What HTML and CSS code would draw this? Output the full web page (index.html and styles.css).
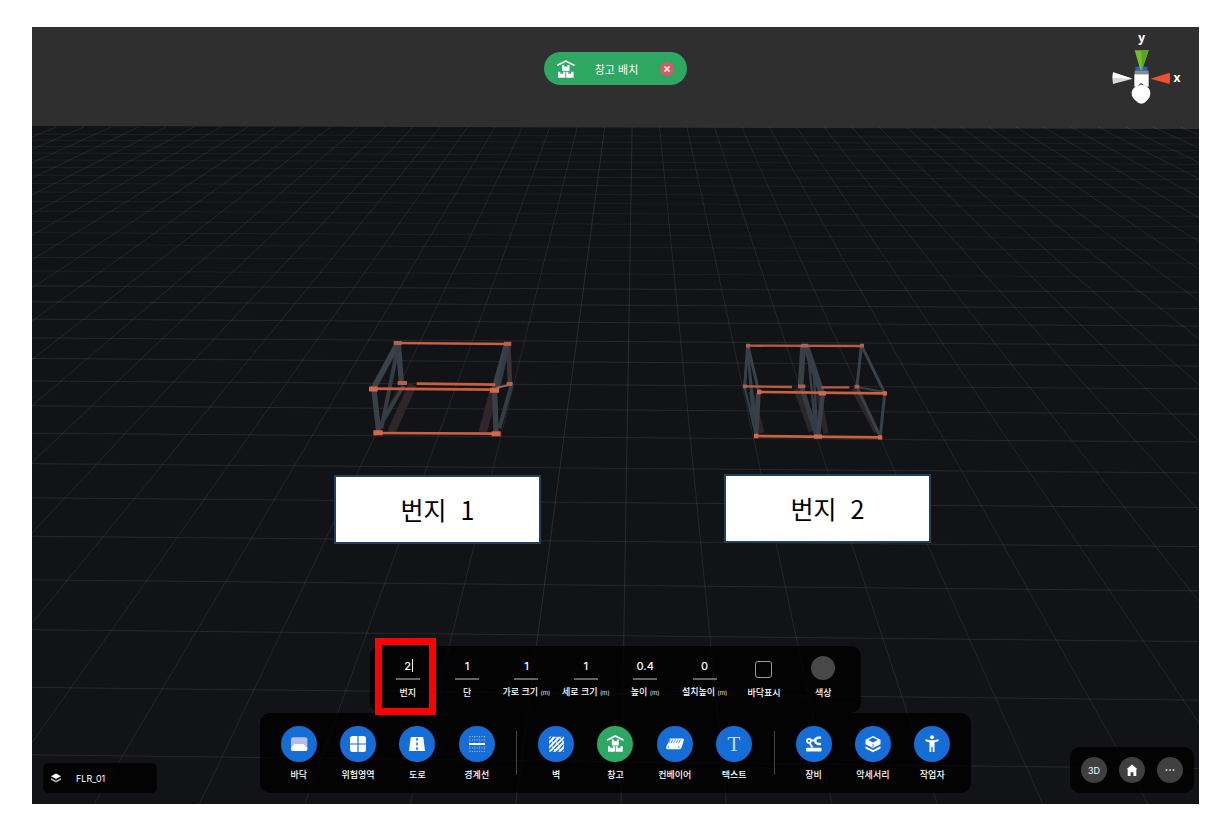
FILE: index.html
```html
<!DOCTYPE html>
<html lang="ko">
<head>
    <meta charset="UTF-8">
    <title>창고 배치</title>
    <meta name="viewport" content="width=device-width, initial-scale=1.0">
    <link rel="stylesheet" href="styles.css">
</head>
<body>
    <svg width="0" height="0" class="defs" aria-hidden="true">
        <symbol id="warehouse" viewBox="9 8 19 19">
            <path d="M10 14.2L18.3 10L26.6 14.2" fill="none" stroke="#fff" stroke-width="1.6"/>
            <path d="M14.8 13.6h2v2.2l1.5-1 1.5 1v-2.2h2v5.8h-7zM11 20.2h2.2v2.3l1.3-.9 1.3.9v-2.3h2.1v5.6H11zM18.7 20.2h2.1v2.3l1.3-.9 1.3.9v-2.3h2.3v5.6h-7z" fill="#fff"/>
        </symbol>
    </svg>

    <main class="stage">
        <svg class="scene" viewBox="0 0 1167 777" preserveAspectRatio="none" aria-hidden="true">
            <path class="floor" d="M0 99L1167 102V777H0z"/>
            <g id="grid"></g>

            <!-- rack with one bay -->
            <g transform="translate(318 298) scale(.3333)" fill="none">
                <path stroke="#302528" stroke-width="25" d="M188 178L124 322M432 196L398 322"/>
                <path stroke="#3b3336" stroke-width="14" d="M475 58L480 176"/>
                <path stroke="#3a4047" stroke-width="16" d="M145 58L154 172M72 195L86 320M434 198L438 322"/>
                <path stroke="#394149" stroke-width="18" d="M142 58L70 190M470 60L434 190"/>
                <path stroke="#343c44" stroke-width="12" d="M144 66L94 310M160 182L92 300M472 70L444 190M484 182L448 310"/>
                <path stroke="#c95f40" stroke-width="8" d="M144 54L474 57M200 176L436 179M70 191L434 194M84 324L440 326"/>
                <path stroke="#8a6a67" stroke-width="6" d="M440 188L486 178"/>
                <path stroke="#b7614b" stroke-width="12" d="M131 54h24M462 56h22M143 174h28M470 177h18"/>
                <path stroke="#d8674a" stroke-width="15" d="M57 192h26M420 196h27M70 323h28M425 326h27"/>
            </g>

            <!-- rack with two bays -->
            <g transform="translate(688 298) scale(.3333)" fill="none">
                <path stroke="#2c2529" stroke-width="16" d="M92 200L126 324M228 190L274 320M296 200L318 326M400 190L470 322"/>
                <path stroke="#394047" stroke-width="9" d="M83 64L74 182M424 64L411 184M494 206L481 334"/>
                <path stroke="#3a3f44" stroke-width="17" d="M249 64L242 182"/>
                <path stroke="#39414a" stroke-width="9" d="M84 64L116 198M426 64L492 200M413 190L478 330"/>
                <path stroke="#37404a" stroke-width="19" d="M258 64L304 200"/>
                <path stroke="#363e46" stroke-width="7" d="M74 186L108 332M84 80L100 300M84 90L112 330M264 80L286 310M280 120L292 320"/>
                <path stroke="#333c45" stroke-width="15" d="M245 188L290 330"/>
                <path stroke="#3b4046" stroke-width="14" d="M115 204L109 328M308 208L294 330"/>
                <path stroke="#3e3e42" stroke-width="6" d="M412 186L488 200"/>
                <path stroke="#bd5b42" stroke-width="7" d="M82 62L426 63M74 184L216 186M304 187L388 187"/>
                <path stroke="#cb633f" stroke-width="8" d="M116 201L494 205M108 333L480 337"/>
                <path stroke="#a86355" stroke-width="11" d="M78 62h12M243 62h22M420 62h12M69 184h12M234 184h22M404 185h14"/>
                <path stroke="#d1694c" stroke-width="13" d="M111 201h13M296 205h22M488 205h13M102 333h13M282 335h24M474 337h13"/>
            </g>
        </svg>

        <p class="note note-one">번지&nbsp; 1</p>
        <p class="note note-two">번지&nbsp; 2</p>

        <svg class="gizmo" viewBox="0 0 324 300" role="img" aria-label="축">
            <path d="M136 140h36v14h-36z" fill="#2460d8"/>
            <path d="M134 91h42L156 150h-5z" fill="#73bd31"/>
            <path d="M154 91h22L156 150z" fill="#5da422"/>
            <path d="M134 152h42v12h-42z" fill="#8a8a8a"/>
            <path d="M133 163h43v37h-43z" fill="#fff"/>
            <path d="M69 157q-4 18 0 35l59-16z" fill="#d9d9d9"/>
            <path d="M69 157l59 19-60-3z" fill="#fff"/>
            <path d="M239 158q4 17 0 34l-58-16z" fill="#f0502f"/>
            <path d="M139 201l14-13 15 13z" fill="#666"/>
            <path d="M125 220q0-14 12-20 8-5 17-5t17 5q10 7 10 20 0 12-8 19-9 11-19 12-10-1-20-12-9-7-9-19z" fill="#fff"/>
            <text x="155" y="66" class="axis">y</text>
            <text x="261" y="187" class="axis">x</text>
        </svg>

        <div class="mode">
            <svg class="mode-icon" aria-hidden="true"><use href="#warehouse"/></svg>
            <span>창고 배치</span>
            <button class="mode-close" type="button" aria-label="닫기">
                <svg viewBox="0 0 14 14"><path d="M4.5 4.5l5 5M9.5 4.5l-5 5" stroke="#fff" stroke-width="1.6"/></svg>
            </button>
        </div>

        <div class="bottom">
            <div class="layer">
                <svg viewBox="0 0 12 12" aria-hidden="true">
                    <path d="M6 1.5L11 4.2 6 7 1 4.2z" fill="#fff"/>
                    <path d="M1 6l5 2.8L11 6v1.8l-5 2.7-5-2.7z" fill="#bbb"/>
                </svg>
                <span>FLR_01</span>
            </div>

            <div class="tools">
                <form class="options">
                    <label class="option selected">
                        <input class="value" type="text" value="2">
                        <span class="caption">번지</span>
                    </label>
                    <label class="option">
                        <input class="value" type="text" value="1">
                        <span class="caption">단</span>
                    </label>
                    <label class="option">
                        <input class="value" type="text" value="1">
                        <span class="caption">가로 크기 <small>(m)</small></span>
                    </label>
                    <label class="option">
                        <input class="value" type="text" value="1">
                        <span class="caption">세로 크기 <small>(m)</small></span>
                    </label>
                    <label class="option">
                        <input class="value" type="text" value="0.4">
                        <span class="caption">높이 <small>(m)</small></span>
                    </label>
                    <label class="option">
                        <input class="value" type="text" value="0">
                        <span class="caption">설치높이 <small>(m)</small></span>
                    </label>
                    <label class="option">
                        <input class="check" type="checkbox">
                        <span class="caption">바닥표시</span>
                    </label>
                    <label class="option">
                        <button class="swatch" type="button" aria-label="색상"></button>
                        <span class="caption">색상</span>
                    </label>
                </form>

                <nav class="dock">
                    <button class="tool" type="button">
                        <svg viewBox="0 0 36 36">
                            <rect x="10" y="11.3" width="16.4" height="13.4" rx="2" fill="#b4bdf0"/>
                            <path d="M13.5 18h9.2l3.7 4v1a2 2 0 0 1-2 2H12a2 2 0 0 1-2-2v-1z" fill="#fff"/>
                        </svg>
                        <span>바닥</span>
                    </button>
                    <button class="tool" type="button">
                        <svg viewBox="0 0 36 36">
                            <rect x="10" y="10" width="16" height="16" rx="2.5" fill="#fff"/>
                            <path d="M18 10v16M10 18h16" stroke="#176dd6" stroke-width="1.2"/>
                        </svg>
                        <span>위험영역</span>
                    </button>
                    <button class="tool" type="button">
                        <svg viewBox="0 0 36 36">
                            <path d="M12.6 11h10.8q.8 0 1 .9L26 25H10l1.600-13.100q.2-.9 1-.9z" fill="#fff"/>
                            <path d="M18 12v12.5" stroke="#176dd6" stroke-width="1.5" stroke-dasharray="2.8 1.8"/>
                        </svg>
                        <span>도로</span>
                    </button>
                    <button class="tool" type="button">
                        <svg viewBox="0 0 36 36">
                            <path d="M10.5 10.500h15.5M10.500 14h15.5M10.500 22h15.500M10.500 25.500h15.500" stroke="#a9caf2" stroke-dasharray="1 1.400"/>
                            <path d="M10.500 11v6M15.500 11v6M20.500 11v6M25.500 11v6M10.500 20v5M15.500 20v5M20.500 20v5M25.500 20v5" stroke="#6ba4e6" stroke-width=".8" stroke-dasharray="1 1.400"/>
                            <path d="M10 18h16" stroke="#fff" stroke-width="1.8"/>
                        </svg>
                        <span>경계선</span>
                    </button>
                    <span class="divider"></span>
                    <button class="tool" type="button">
                        <svg viewBox="0 0 36 36">
                            <path d="M11 10.700h15v15H11z" fill="#fff"/>
                            <path d="M10.500 14.500l4.500-4.500M10.500 19.500l9.500-9.500M10.500 24.500l14.500-14.500M12.500 27L27 12.500M17.500 27l9.500-9.500M22.500 27l4.500-4.500" stroke="#176dd6" stroke-width="1.400" stroke-dasharray="5 .8"/>
                        </svg>
                        <span>벽</span>
                    </button>
                    <button class="tool active" type="button">
                        <svg viewBox="0 0 36 36"><use href="#warehouse" x="9" y="8" width="19" height="19"/></svg>
                        <span>창고</span>
                    </button>
                    <button class="tool" type="button">
                        <svg viewBox="0 0 36 36">
                            <path d="M13 12.500h12.500q1.800 0 1.300 1.700l-2 6.800q-.6 2.300-2.600 2.300H11q-2.300 0-1.900-2.100.2-1 .8-1.800z" fill="#fff"/>
                            <path d="M13.500 13.300l-2 4M16 13.300l-2 4M18.500 13.300l-2 4M21 13.300l-2 4M23.500 13.300l-2 4" stroke="#176dd6" stroke-width=".7"/>
                            <circle cx="11.300" cy="21" r=".7" fill="#176dd6"/><circle cx="21.800" cy="21" r=".7" fill="#176dd6"/>
                        </svg>
                        <span>컨베이어</span>
                    </button>
                    <button class="tool" type="button">
                        <svg viewBox="0 0 36 36"><text x="18" y="25" class="serif-t">T</text></svg>
                        <span>텍스트</span>
                    </button>
                    <span class="divider"></span>
                    <button class="tool" type="button">
                        <svg viewBox="0 0 36 36" fill="none" stroke="#fff">
                            <rect x="10" y="21.700" width="15.500" height="3.800" rx="1" fill="#fff" stroke="none"/>
                            <circle cx="13" cy="14.800" r="2" stroke-width="1.700"/>
                            <path d="M15 14.600h4M13.500 17l3 4.500" stroke-width="2"/>
                            <path d="M25 11.700h-3.200L19.500 13v3.500l2.300 1.500H25" stroke-width="2.300"/>
                        </svg>
                        <span>장비</span>
                    </button>
                    <button class="tool" type="button">
                        <svg viewBox="0 0 36 36">
                            <path d="M18 10l7.500 3.800v4.500L18 22l-7.500-3.700v-4.500z" fill="#fff"/>
                            <path d="M18 11.400l4.800 2.600-4.800 2.500-4.800-2.500zM17.600 18h.8v3h-.8z" fill="#176dd6"/>
                            <path d="M10.500 20.300L18 24l7.500-3.700v2.300L18 26.300l-7.500-3.700z" fill="#fff"/>
                        </svg>
                        <span>악세서리</span>
                    </button>
                    <button class="tool" type="button">
                        <svg viewBox="0 0 36 36">
                            <circle cx="18" cy="11.300" r="2" fill="#fff"/>
                            <path d="M11.500 13.300l4.500 1h4l4.500-1 .3 1.700-4.300 1.500V26h-1.800v-5h-1.400v5h-1.800v-9.500L11.200 15z" fill="#fff"/>
                        </svg>
                        <span>작업자</span>
                    </button>
                </nav>
            </div>

            <div class="view">
                <button type="button">3D</button>
                <button type="button" aria-label="홈">
                    <svg viewBox="0 0 26 26"><path d="M13 7.500l5.500 4.800h-1.200V19h-2.900v-3.700h-2.800V19H8.700v-6.700H7.500z" fill="#fff"/></svg>
                </button>
                <button type="button" aria-label="더보기">
                    <svg viewBox="0 0 26 26" fill="#ccc"><circle cx="9.500" cy="13" r="1"/><circle cx="13" cy="13" r="1"/><circle cx="16.500" cy="13" r="1"/></svg>
                </button>
            </div>
        </div>
    </main>
    <script src="grid.js"></script>
</body>
</html>
```

FILE: styles.css
```css
*,
*::before,
*::after {
    box-sizing: border-box;
}
body {
    margin: 0;
    padding: 27px 27px 18px 32px;
    min-height: 100vh;
    display: flex;
    background: #fff;
    font-family: Inter, "Noto Sans CJK KR", sans-serif;
    color: #fff;
}
button {
    border: none;
    padding: 0;
    background: none;
    color: inherit;
    font-family: inherit;
    cursor: pointer;
}
.defs {
    position: absolute;
}
.stage {
    position: relative;
    flex: 1;
    display: flex;
    flex-direction: column;
    justify-content: space-between;
    align-items: center;
    padding-top: 25px;
    background: #2f2f2f;
    overflow: hidden;
}
.scene {
    position: absolute;
    inset: 0;
    width: 100%;
    height: 100%;
}
.floor {
    fill: #121317;
}
.grid-line {
    stroke: #fff;
    stroke-opacity: 0.1;
    stroke-width: 1;
}
/* labels pinned on the canvas */
.note {
    position: absolute;
    margin: 0;
    width: 207px;
    height: 69px;
    display: flex;
    align-items: center;
    justify-content: center;
    padding-bottom: 2px;
    background: #fff;
    border: 2px solid #24405c;
    color: #000;
    font-family: "Noto Sans CJK KR", sans-serif;
    font-size: 25px;
    font-weight: 400;
}
.note-one {
    left: 302px;
    top: 448px;
}
.note-two {
    left: 692px;
    top: 447px;
}
.gizmo {
    position: absolute;
    right: 1px;
    top: -7px;
    width: 108px;
    height: 100px;
}
.axis {
    fill: #fff;
    font-family: "Open Sans", sans-serif;
    font-size: 36px;
    font-weight: 700;
    text-anchor: middle;
}
/* top pill */
.mode {
    position: relative;
    display: flex;
    align-items: center;
    height: 33px;
    padding: 0 13px 0 12px;
    border-radius: 17px;
    background: #2ea762;
    font-size: 11px;
}
.mode-icon {
    width: 20px;
    height: 20px;
    margin-right: 19px;
}
.mode-close {
    width: 14px;
    height: 14px;
    margin-left: 22px;
    border-radius: 50%;
    background: #d85a66;
}
.mode-close svg,
.view svg {
    display: block;
    width: 100%;
}
.bottom {
    position: relative;
    width: 100%;
    display: grid;
    grid-template-columns: 1fr auto 1fr;
    align-items: end;
    padding: 0 5px 11px;
}
.layer,
.options,
.dock,
.view {
    background: rgba(0, 0, 0, 0.8);
    border-radius: 10px;
}
.layer {
    justify-self: start;
    display: flex;
    align-items: center;
    width: 114px;
    height: 30px;
    margin-left: 6px;
    padding-left: 7px;
    gap: 14px;
    border-radius: 5px;
    font-size: 9px;
}
.layer svg {
    width: 12px;
    height: 12px;
}
.tools {
    display: flex;
    flex-direction: column;
    align-items: center;
}
.options {
    display: flex;
    width: 491px;
    height: 67px;
    padding: 0 8px;
}
.option {
    position: relative;
    flex: 1;
    display: flex;
    flex-direction: column;
    align-items: center;
    justify-content: space-between;
    padding: 10px 0 12px;
}
.value {
    width: 24px;
    height: 24px;
    padding: 0 0 3px;
    border: none;
    border-bottom: 2px solid #636363;
    background: none;
    color: #fff;
    font-family: Inter, sans-serif;
    font-size: 11px;
    font-weight: 500;
    text-align: center;
    outline: none;
}
.caption {
    font-size: 9px;
    font-weight: 500;
    line-height: 16px;
    white-space: nowrap;
}
.caption small {
    font-size: 6px;
    color: #ccc;
}
.selected::before {
    content: "";
    position: absolute;
    left: -3px;
    top: -8px;
    width: 61px;
    height: 77px;
    border: 7px solid #f00;
    pointer-events: none;
}
/* text cursor */
.selected::after {
    content: "";
    position: absolute;
    left: 34px;
    top: 13px;
    width: 1px;
    height: 13px;
    background: #fff;
}
.check {
    appearance: none;
    width: 17px;
    height: 17px;
    margin: 5px 0 0;
    border: 1px solid #999;
    border-radius: 3px;
}
.swatch {
    width: 24px;
    height: 24px;
    border-radius: 50%;
    background: #484848;
}
.dock {
    display: flex;
    width: 711px;
    height: 80px;
    padding: 0 9px;
}
.tool {
    flex: 1 1 0;
    min-width: 0;
    display: flex;
    flex-direction: column;
    align-items: center;
    gap: 5px;
    padding-top: 13px;
    font-size: 9px;
    font-weight: 500;
    line-height: 16px;
    white-space: nowrap;
}
.tool svg {
    flex: none;
    width: 36px;
    height: 36px;
    border-radius: 50%;
    background: #176dd6;
}
.tool.active svg {
    background: #2ea762;
}
.serif-t {
    fill: #c4daf5;
    font-family: "Liberation Serif", serif;
    font-size: 21px;
    text-anchor: middle;
}
.divider {
    width: 1px;
    height: 44px;
    margin: 18px 9px 0 10px;
    background: #444;
}
.view {
    justify-self: end;
    display: flex;
    gap: 12px;
    padding: 10px 11px;
}
.view button {
    width: 26px;
    height: 26px;
    border-radius: 50%;
    background: #404040;
    font-size: 9px;
}
```

FILE: grid.js
```js
// perspective floor grid, all lines run to the same horizon
var grid = document.getElementById('grid');
var horizon = -138;
var centerX = 604;

function addLine(x1, y1, x2, y2, opacity) {
    var line = document.createElementNS('http://www.w3.org/2000/svg', 'line');
    line.setAttribute('x1', x1);
    line.setAttribute('y1', y1);
    line.setAttribute('x2', x2);
    line.setAttribute('y2', y2);
    line.setAttribute('class', 'grid-line');
    line.setAttribute('opacity', opacity);
    grid.appendChild(line);
}

for (var n = -23; n <= 23; n++) {
    var slope = n * 0.1152 - 0.0163;
    addLine(centerX + slope * (100 - horizon), 100, centerX + slope * (777 - horizon), 777, n === 0 || n === -1 ? 1 : 0.8);
}

for (var k = -2; k < 31; k++) {
    var depth = 1 / (0.001155 + 0.0000975 * k);
    var y = horizon + depth;
    addLine(0, y, 1167, y + depth * 0.016, y < 250 ? 0.5 : 0.9);
}
```
